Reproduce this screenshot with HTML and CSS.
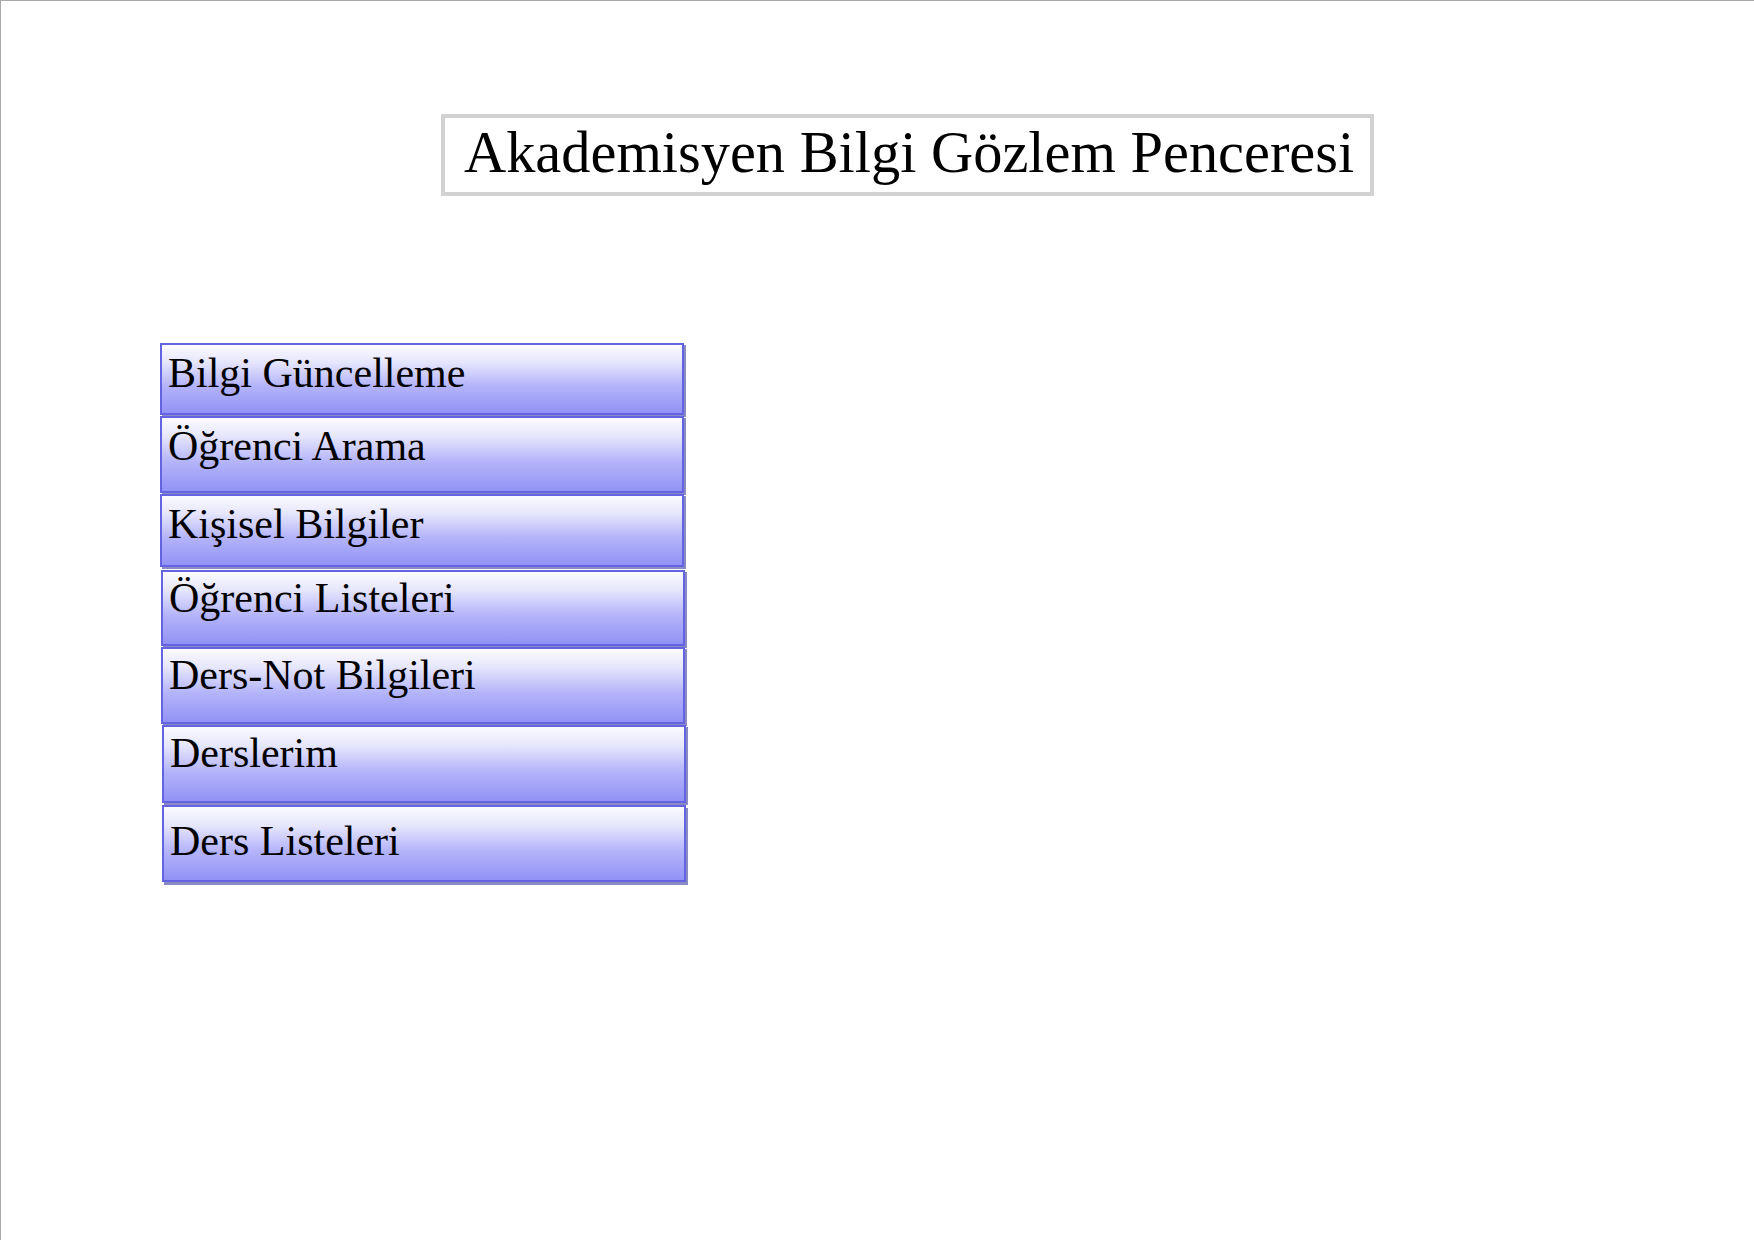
FILE: index.html
```html
<!DOCTYPE html>
<html lang="tr">
<head>
<meta charset="utf-8">
<title>Akademisyen Bilgi Gözlem Penceresi</title>
<link rel="stylesheet" href="styles.css">
</head>
<body>
<div class="page">
  <div class="title-box">Akademisyen Bilgi Gözlem Penceresi</div>
  <nav class="menu">
    <div class="menu-item">Bilgi Güncelleme</div>
    <div class="menu-item">Öğrenci Arama</div>
    <div class="menu-item">Kişisel Bilgiler</div>
    <div class="menu-item">Öğrenci Listeleri</div>
    <div class="menu-item">Ders-Not Bilgileri</div>
    <div class="menu-item">Derslerim</div>
    <div class="menu-item">Ders Listeleri</div>
  </nav>
</div>
</body>
</html>
```
FILE: styles.css
```css
html, body {
  margin: 0;
  padding: 0;
  background: #ffffff;
}
body {
  font-family: "Liberation Serif", "Times New Roman", serif;
  color: #000;
}
.page {
  width: 1753px;
  height: 1239px;
  border-top: 1px solid #a9a9a9;
  border-left: 1px solid #a9a9a9;
  overflow: hidden;
}
.title-box {
  box-sizing: border-box;
  margin: 113px 0 0 440px;
  width: 933px;
  height: 82px;
  border: 4px solid #d2d2d2;
  padding: 0 0 4px 19px;
  font-size: 58.4px;
  line-height: 70px;
  white-space: nowrap;
}
.menu {
  margin: 147px 0 0 159px;
  display: flex;
  flex-direction: column;
  width: 526px;
}
.menu-item {
  box-sizing: border-box;
  width: 524px;
  height: 72px;
  margin-bottom: 1px;
  border: 2px solid #6464e2;
  background: linear-gradient(to bottom, #fbfbff 0%, #e6e6fc 25%, #b4b4fa 60%, #9292f6 100%);
  box-shadow: 2px 2px 0 #8a8ac4;
  padding: 7px 0 0 6px;
  font-size: 42px;
  line-height: 42px;
  white-space: nowrap;
}
.menu-item:nth-child(2) { height: 77px; }
.menu-item:nth-child(3) { height: 73px; margin-bottom: 3px; }
.menu-item:nth-child(4) { height: 76px; margin-left: 1px; padding-top: 5px; }
.menu-item:nth-child(5) { height: 77px; margin-left: 1px; padding-top: 5px; }
.menu-item:nth-child(6) { height: 78px; margin-left: 2px; margin-bottom: 2px; padding-top: 5px; }
.menu-item:nth-child(7) { height: 77px; margin-left: 2px; padding-top: 13px; box-shadow: 2px 3px 0 #8a8ac4; }
```
